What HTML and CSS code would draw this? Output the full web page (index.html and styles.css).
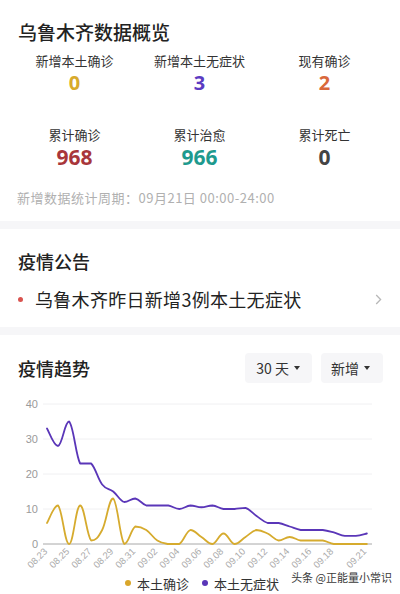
FILE: index.html
```html
<!DOCTYPE html>
<html lang="zh-CN">
<head>
<meta charset="utf-8">
<title>乌鲁木齐数据概览</title>
<link rel="stylesheet" href="styles.css">
</head>
<body>
<section class="card overview">
  <h1 class="title">乌鲁木齐数据概览</h1>
  <div class="stats">
    <div class="stat"><div class="label">新增本土确诊</div><div class="num c-yellow">0</div></div>
    <div class="stat"><div class="label">新增本土无症状</div><div class="num c-purple">3</div></div>
    <div class="stat"><div class="label">现有确诊</div><div class="num c-orange">2</div></div>
    <div class="stat"><div class="label">累计确诊</div><div class="num big c-red">968</div></div>
    <div class="stat"><div class="label">累计治愈</div><div class="num big c-teal">966</div></div>
    <div class="stat"><div class="label">累计死亡</div><div class="num big c-gray">0</div></div>
  </div>
  <p class="period">新增数据统计周期：09月21日 00:00-24:00</p>
</section>
<div class="gap"></div>
<section class="card notice">
  <h2 class="title">疫情公告</h2>
  <div class="notice-row">
    <span class="dot"></span>
    <span class="notice-text">乌鲁木齐昨日新增3例本土无症状</span>
    <svg class="chevron" width="7" height="11" viewBox="0 0 7 11"><path d="M1.2 1 L5.6 5.5 L1.2 10" fill="none" stroke="#b8b8b8" stroke-width="1.3"/></svg>
  </div>
</section>
<div class="gap"></div>
<section class="card trend">
  <div class="trend-head">
    <h2 class="title">疫情趋势</h2>
    <div class="filters">
      <div class="filter">30 天<span class="caret"></span></div>
      <div class="filter">新增<span class="caret"></span></div>
    </div>
  </div>
  <svg class="chart" width="400" height="180" viewBox="0 392 400 180">
    <g class="grid">
      <line x1="43" y1="405" x2="372" y2="405"/>
      <line x1="43" y1="440" x2="372" y2="440"/>
      <line x1="43" y1="475" x2="372" y2="475"/>
      <line x1="43" y1="510" x2="372" y2="510"/>
    </g>
    <line class="base" x1="43" y1="545" x2="372" y2="545"/>
    <g class="ylab">
      <text x="38" y="409">40</text>
      <text x="38" y="444">30</text>
      <text x="38" y="479">20</text>
      <text x="38" y="514">10</text>
      <text x="38" y="549">0</text>
    </g>
    <g class="xlab">
      <text transform="translate(48,553) rotate(-45)">08.23</text>
      <text transform="translate(70,553) rotate(-45)">08.25</text>
      <text transform="translate(92,553) rotate(-45)">08.27</text>
      <text transform="translate(114,553) rotate(-45)">08.29</text>
      <text transform="translate(136,553) rotate(-45)">08.31</text>
      <text transform="translate(158,553) rotate(-45)">09.02</text>
      <text transform="translate(180,553) rotate(-45)">09.04</text>
      <text transform="translate(202,553) rotate(-45)">09.06</text>
      <text transform="translate(224,553) rotate(-45)">09.08</text>
      <text transform="translate(246,553) rotate(-45)">09.10</text>
      <text transform="translate(268,553) rotate(-45)">09.12</text>
      <text transform="translate(290,553) rotate(-45)">09.14</text>
      <text transform="translate(312,553) rotate(-45)">09.16</text>
      <text transform="translate(334,553) rotate(-45)">09.18</text>
      <text transform="translate(367,553) rotate(-45)">09.21</text>
    </g>
    <path id="line-yellow" class="series s-yellow" d=""/>
    <path id="line-purple" class="series s-purple" d=""/>
  </svg>
  <div class="legend">
    <span class="legend-item"><span class="ldot d-yellow"></span>本土确诊</span>
    <span class="legend-item"><span class="ldot d-purple"></span>本土无症状</span>
  </div>
  <div class="watermark">头条 @正能量小常识</div>
</section>
<script src="script.js"></script>
</body>
</html>
```

FILE: styles.css
```css
* { box-sizing: border-box; }
html, body { margin: 0; padding: 0; }
body {
  width: 400px;
  background: #ffffff;
  font-family: "Noto Sans CJK SC", "Noto Sans", sans-serif;
  color: #222;
  overflow: hidden;
}
.card { background: #fff; }
.gap { height: 8px; background: #f6f6f8; }
.title {
  margin: 0;
  font-size: 19px;
  line-height: 26px;
  font-weight: 500;
  color: #222;
}
.overview { padding: 19px 18px 14px; }
.stats {
  display: grid;
  grid-template-columns: repeat(3, 125px);
  margin: 7px -6px 0 -6px;
  row-gap: 30px;
}
.stat { display: flex; flex-direction: column; align-items: center; }
.label { font-size: 13px; line-height: 18px; color: #333; }
.num {
  font-size: 20px;
  line-height: 26px;
  font-weight: 700;
  font-family: "Noto Sans", "Open Sans", sans-serif;
}
.num.big { font-size: 21px; }
.c-yellow { color: #d8aa2c; }
.c-purple { color: #5b3bc2; }
.c-orange { color: #d9683c; }
.c-red { color: #a8363b; }
.c-teal { color: #1e9a8e; }
.c-gray { color: #444; }
.period {
  margin: 19px 0 0 -1px;
  font-size: 13px;
  line-height: 18px;
  color: #b0b0b0;
  letter-spacing: 0.5px;
}
.notice { padding: 20px 18px 16px; }
.notice .title { font-size: 18px; line-height: 24px; }
.notice-row {
  display: flex;
  align-items: center;
  margin-top: 14px;
  height: 24px;
}
.dot {
  width: 5px; height: 5px; border-radius: 50%;
  background: #d9534f;
  margin: 0 12px 0 0;
}
.notice-text { flex: 1; font-size: 18px; line-height: 24px; color: #222; letter-spacing: 0.3px; }
.trend { position: relative; padding-top: 18px; }
.trend-head {
  display: flex;
  align-items: center;
  justify-content: space-between;
  padding: 0 17px 0 18px;
  height: 30px;
}
.trend .title { font-size: 18px; line-height: 24px; }
.filters { display: flex; gap: 9px; }
.filter {
  display: flex;
  align-items: center;
  height: 30px;
  padding: 0 12px 0 11px;
  background: #f6f6f8;
  border-radius: 4px;
  font-size: 14px;
  color: #333;
}
.filter:last-child { padding: 0 13px 0 10px; }
.caret {
  width: 0; height: 0;
  margin-left: 5px;
  border-left: 3px solid transparent;
  border-right: 3px solid transparent;
  border-top: 4px solid #333;
}
.chart { display: block; margin-top: 8px; }
.grid line { stroke: #f0f0f2; stroke-width: 1; }
.base { stroke: #a8a8a8; stroke-width: 1; }
.ylab text { font-size: 11px; fill: #9a9a9a; text-anchor: end; font-family: "Liberation Sans", sans-serif; }
.xlab text { font-size: 9.5px; fill: #aaa; text-anchor: end; font-family: "Liberation Sans", sans-serif; }
.series { fill: none; stroke-width: 1.8; stroke-linejoin: round; stroke-linecap: round; }
.s-yellow { stroke: #d6ab2e; }
.s-purple { stroke: #5a36b8; }
.legend {
  display: flex;
  justify-content: center;
  gap: 13px;
  height: 24px;
  align-items: center;
  padding-left: 4px;
}
.legend-item { display: flex; align-items: center; font-size: 13px; color: #333; }
.ldot { width: 6px; height: 6px; border-radius: 50%; margin-right: 6px; }
.d-yellow { background: #d9a62a; }
.d-purple { background: #5a36b8; }
.watermark {
  position: absolute;
  right: 8px;
  top: 234px;
  font-size: 11px;
  line-height: 16px;
  color: #3a3a3a;
  text-shadow: 0 0 2px #fff;
}
```

FILE: script.js
```js
(function () {
  var yellow = [6,11,0,11,1,4,13,0,5,4,1,0,0,4,2,0,3,0,2,4,3,1,2,1,1,1,0,0,0,0];
  var purple = [33,28,35,23,23,17,15,12,13,11,11,11,10,11,10.5,11,10,10,10.3,8,6,6,5,4,4,4,3.3,2.3,2.3,3];
  var x0 = 47, step = 11.03, base = 545, unit = 3.5, s = 0.2;
  function build(data) {
    var pts = data.map(function (v, i) { return [x0 + step * i, base - v * unit]; });
    var d = 'M' + pts[0][0].toFixed(2) + ' ' + pts[0][1].toFixed(2);
    function clamp(v, a, b) { var lo = Math.min(a, b), hi = Math.max(a, b); return Math.max(lo, Math.min(hi, v)); }
    for (var i = 0; i < pts.length - 1; i++) {
      var p0 = pts[i - 1] || pts[i], p1 = pts[i], p2 = pts[i + 1], p3 = pts[i + 2] || p2;
      var c1x = p1[0] + (p2[0] - p0[0]) * s, c1y = clamp(p1[1] + (p2[1] - p0[1]) * s, p1[1], p2[1]);
      var c2x = p2[0] - (p3[0] - p1[0]) * s, c2y = clamp(p2[1] - (p3[1] - p1[1]) * s, p1[1], p2[1]);
      d += ' C' + c1x.toFixed(2) + ' ' + c1y.toFixed(2) + ' ' + c2x.toFixed(2) + ' ' + c2y.toFixed(2) + ' ' + p2[0].toFixed(2) + ' ' + p2[1].toFixed(2);
    }
    return d;
  }
  document.getElementById('line-yellow').setAttribute('d', build(yellow));
  document.getElementById('line-purple').setAttribute('d', build(purple));
})();
```
